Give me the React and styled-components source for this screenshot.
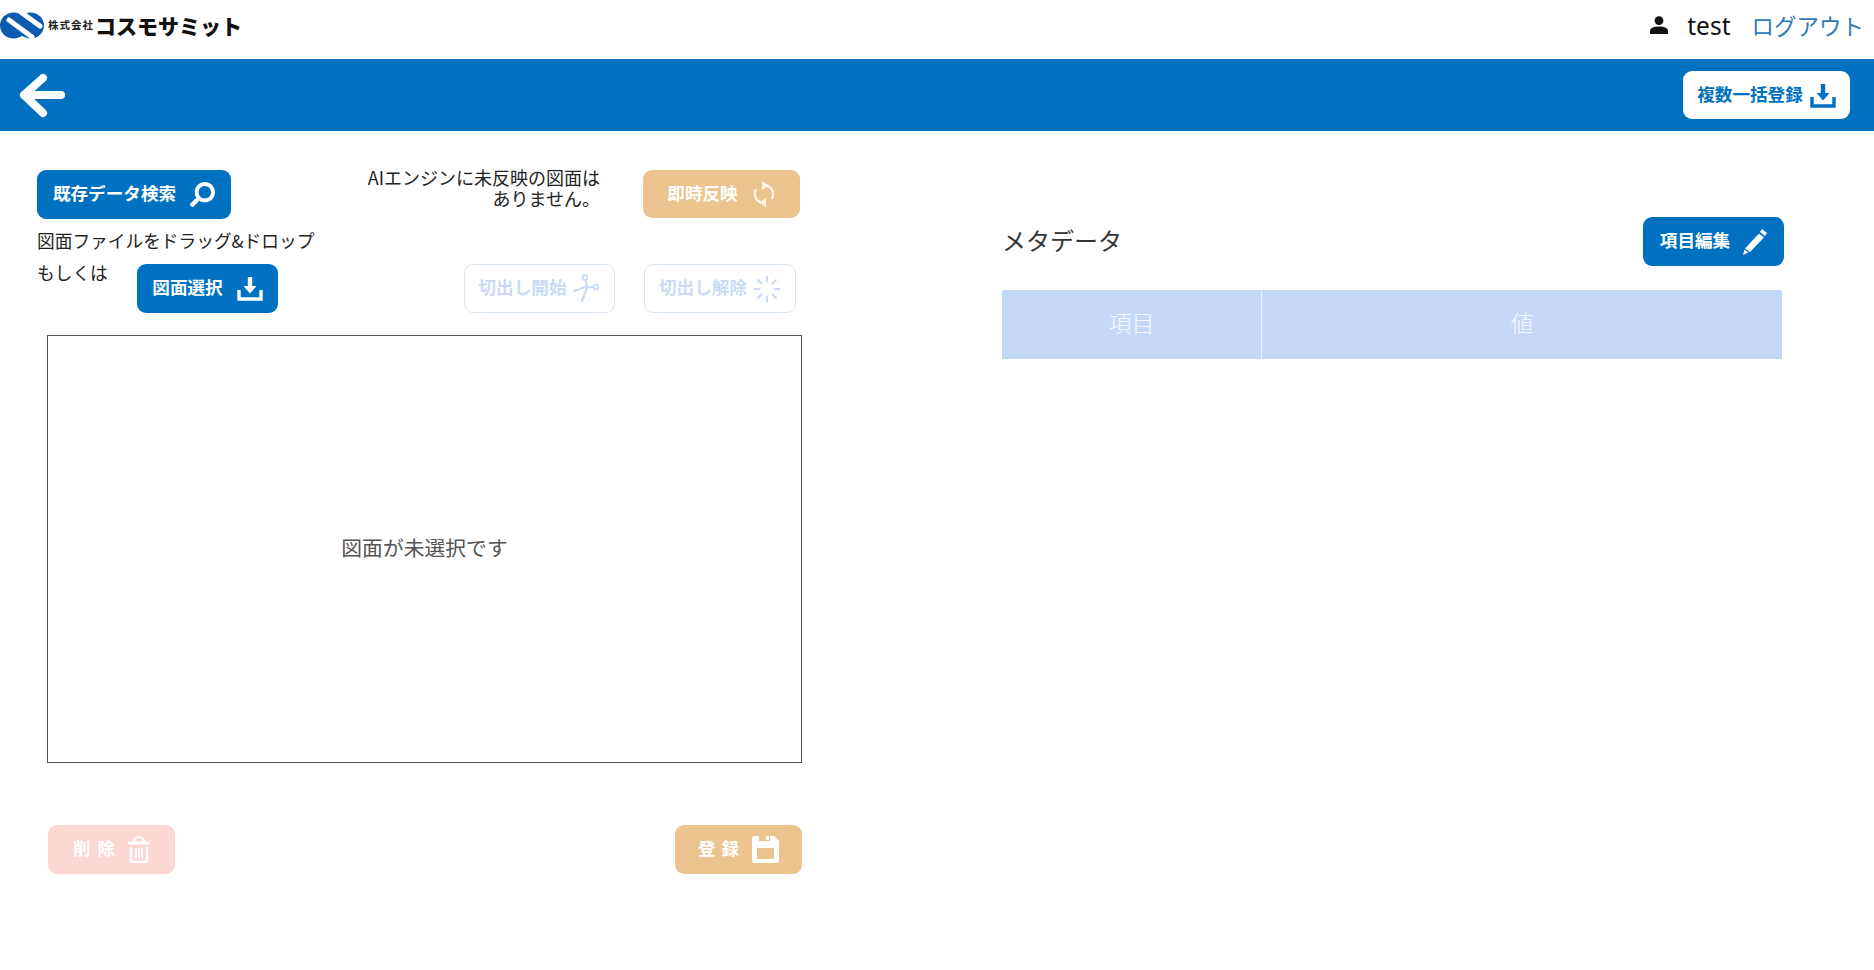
import styled, { createGlobalStyle } from 'styled-components'
import { FaSearch } from 'react-icons/fa'

const GlobalStyle = createGlobalStyle`
  html, body {
    margin: 0;
    padding: 0;
    background: #fff;
    font-family: "Noto Sans CJK JP", "Noto Sans", sans-serif;
    color: #222;
  }
`

const colors = {
  primary: '#0071c1',
  orange: '#ebc48f',
  pink: '#fdd7d3',
  faint: '#c9daf6',
}

const Page = styled.div`
  width: 1874px;
  height: 970px;
  overflow: hidden;
`
const Header = styled.header`
  height: 59px;
  display: flex;
  align-items: center;
  justify-content: space-between;
`
const Logo = styled.div`
  display: flex;
  align-items: center;
  margin-top: -8px;
`
const Company = styled.span`
  font-size: 10.5px;
  font-weight: 700;
  color: #222;
  margin-left: 4px;
  letter-spacing: 1px;
  line-height: 1;
`
const CompanyName = styled.span`
  font-size: 21px;
  font-weight: 900;
  color: #111;
  line-height: 1;
  margin-left: 1px;
`
const UserArea = styled.div`
  display: flex;
  align-items: center;
  margin-right: 10px;
  margin-top: -9px;
  font-size: 22.5px;
`
const UserName = styled.span`
  color: #111;
  margin: 0 21px 0 19px;
  font-family: "Noto Sans", sans-serif;
  font-size: 24.5px;
`
const Logout = styled.a`
  color: #337ab7;
  font-size: 22.5px;
`
const Bar = styled.div`
  height: 72px;
  background: ${colors.primary};
  display: flex;
  align-items: center;
  justify-content: space-between;
  padding: 0 24px 0 19px;
`
const Main = styled.main`
  display: flex;
`
const LeftPane = styled.section`
  width: 765px;
  margin: 39px 0 0 37px;
`
const TopRow = styled.div`
  display: flex;
  height: 49px;
`
const Notice = styled.p`
  width: 271px;
  margin: -3px 0 0 98px;
  text-align: right;
  font-size: 18px;
  line-height: 21px;
`
const HintRow = styled.div`
  display: flex;
  justify-content: space-between;
  height: 94px;
`
const HintText = styled.p`
  margin: 9px 0 0;
  font-size: 17.7px;
  line-height: 24px;
`
const SelectRow = styled.div`
  display: flex;
  align-items: flex-start;
  margin-top: 12px;
`
const SelectLabel = styled.span`
  font-size: 17.7px;
  line-height: 24px;
  width: 100px;
  margin-top: -4px;
`
const CutButtons = styled.div`
  display: flex;
  gap: 29px;
  align-items: flex-end;
  margin-right: 6px;
`
const Button = styled.button`
  box-sizing: border-box;
  display: flex;
  align-items: center;
  justify-content: center;
  gap: ${(p) => p.$gap || 14}px;
  width: ${(p) => p.$w}px;
  height: ${(p) => p.$h || 49}px;
  margin-left: ${(p) => p.$ml || 0}px;
  padding: 0;
  border: ${(p) => (p.$outline ? '1px solid #dce7f5' : 'none')};
  border-radius: 9px;
  background: ${(p) => p.$bg};
  color: ${(p) => p.$color || '#fff'};
  font-family: inherit;
  font-size: 17.6px;
  font-weight: 700;
  letter-spacing: ${(p) => p.$spacing || 0};
  white-space: nowrap;
  flex-shrink: 0;
`
const Label = styled.span`
  margin-top: -4px;
`
const Canvas = styled.div`
  box-sizing: border-box;
  width: 755px;
  height: 428px;
  margin: 22px 0 0 10px;
  padding-bottom: 5px;
  border: 1px solid #555;
  display: flex;
  align-items: center;
  justify-content: center;
  font-size: 20.8px;
  color: #555;
`
const Footer = styled.div`
  display: flex;
  justify-content: space-between;
  width: 755px;
  margin: 62px 0 0 10px;
`
const RightPane = styled.section`
  width: 782px;
  margin: 86px 0 0 200px;
`
const MetaHead = styled.div`
  display: flex;
  align-items: center;
  justify-content: space-between;
  width: 782px;
`
const MetaTitle = styled.h2`
  margin: 0;
  padding-bottom: 5px;
  font-size: 24px;
  font-weight: 400;
  color: #333;
`
const Table = styled.div`
  display: grid;
  grid-template-columns: 259px 1fr;
  width: 780px;
  height: 69px;
  margin-top: 24px;
  background: #c6d8f7;
`
const HeadCell = styled.div`
  display: flex;
  align-items: center;
  justify-content: center;
  padding-bottom: 5px;
  color: #f5f8fe;
  font-size: 23px;
  font-weight: 300;
  & + & {
    border-left: 1px solid #eaf1fc;
  }
`

const UserIcon = () => (
  <svg width="18" height="18" viewBox="0 0 18 18" fill="#111">
    <circle cx="9" cy="4.6" r="4.4" />
    <path d="M0 18 V15 Q0 10.5 9 10.5 Q18 10.5 18 15 V18 Z" />
  </svg>
)
const BackIcon = () => (
  <svg width="47" height="46" viewBox="0 0 47 46" fill="none" stroke="#fff" strokeWidth="8" strokeLinecap="round" strokeLinejoin="round">
    <path d="M24 6 L5 23 L24 41 M5 23 H42" />
  </svg>
)
const DownloadIcon = ({ color = '#fff' }) => (
  <svg width="26" height="25" viewBox="0 0 26 25" fill="none" stroke={color} strokeWidth="3.4">
    <path d="M2 14 V23 H24 V14" />
    <path d="M13 1 V12" strokeWidth="4.4" />
    <path d="M6.5 10 H19.5 L13 17.5 Z" fill={color} strokeWidth="0" />
  </svg>
)
const RefreshIcon = () => (
  <svg width="24" height="26" viewBox="0 0 24 26" fill="none" stroke="#fdf4e8" strokeWidth="2.4">
    <path d="M15 4.5 A 9.5 9.5 0 0 1 20 18" />
    <path d="M9 21.5 A 9.5 9.5 0 0 1 4 8" />
    <path d="M10 0 L17 4.5 L10 9 Z" fill="#fdf4e8" strokeWidth="0" />
    <path d="M14 17 L7 21.5 L14 26 Z" fill="#fdf4e8" strokeWidth="0" />
  </svg>
)
const ScissorsIcon = () => (
  <svg width="28" height="30" viewBox="0 0 28 30" fill="none" stroke={colors.faint} strokeWidth="1.8" strokeLinecap="round">
    <circle cx="13" cy="3.5" r="2.4" />
    <circle cx="24" cy="13" r="2.4" />
    <path d="M13.5 6 L15 14 L10 27" strokeWidth="2.2" />
    <path d="M21 13 L12 13.5 L2 17" strokeWidth="2.2" />
  </svg>
)
const SpinnerIcon = () => (
  <svg width="28" height="28" viewBox="0 0 28 28" fill="none" stroke={colors.faint} strokeWidth="2" strokeLinecap="round">
    <path d="M14 1.5 V6.5 M14 21.5 V26.5 M1.5 14 H6.5 M21.5 14 H26.5 M5 5 L8.5 8.5 M19.5 19.5 L23 23 M23 5 L19.5 8.5 M8.5 19.5 L5 23" />
  </svg>
)
const TrashIcon = () => (
  <svg width="22" height="27" viewBox="0 0 22 27" fill="none" stroke="#fff" strokeWidth="2">
    <path d="M6 6 Q6 1 11 1 Q16 1 16 6" />
    <path d="M0 7 H22" strokeWidth="3" />
    <path d="M3 11 V25 Q3 26 4 26 H18 Q19 26 19 25 V11" strokeWidth="2.4" />
    <path d="M8 12 V23 M11 12 V23 M14 12 V23" strokeWidth="1.6" />
  </svg>
)
const SaveIcon = () => (
  <svg width="27" height="27" viewBox="0 0 27 27">
    <path
      fill="#fff"
      fillRule="evenodd"
      d="M2 0 H7 V5 H18 V0 H22 L27 5 V25 Q27 27 25 27 H2 Q0 27 0 25 V2 Q0 0 2 0 Z M5 12 V23 H22 V12 Z"
    />
    <rect x="14" y="0" width="3" height="4" fill="#fff" />
  </svg>
)
const PenIcon = () => (
  <svg width="24" height="26" viewBox="0 0 24 26" fill="#fff">
    <path d="M19 0 L24 4 L22 7 L17 3 Z" />
    <path d="M16 4.5 L21 8.5 L7 23 L2 19.5 Z" />
    <path d="M1.5 20.5 L5.5 23.5 L0 26 Z" />
  </svg>
)
const LogoMark = () => (
  <svg width="44" height="27" viewBox="0 0 44 27">
    <ellipse cx="13.5" cy="13.5" rx="13.5" ry="13" fill="#0b5cb0" />
    <ellipse cx="30.5" cy="13.5" rx="13.5" ry="13" fill="#0b5cb0" />
    <path d="M9 8 L32 25 M22 1 L40 14" stroke="#fff" strokeWidth="5" strokeLinecap="round" />
  </svg>
)

function App() {
  return (
    <Page>
      <GlobalStyle />
      <Header>
        <Logo>
          <LogoMark />
          <Company>株式会社</Company>
          <CompanyName>コスモサミット</CompanyName>
        </Logo>
        <UserArea>
          <UserIcon />
          <UserName>test</UserName>
          <Logout>ログアウト</Logout>
        </UserArea>
      </Header>
      <Bar>
        <BackIcon />
        <Button $w={167} $h={48} $bg="#fff" $color={colors.primary} $gap={7}>
          <Label>複数一括登録</Label>
          <DownloadIcon color={colors.primary} />
        </Button>
      </Bar>
      <Main>
        <LeftPane>
          <TopRow>
            <Button $w={194} $bg={colors.primary}>
              <Label>既存データ検索</Label>
              <FaSearch size={25} style={{ transform: 'scaleX(-1)' }} />
            </Button>
            <Notice>
              AIエンジンに未反映の図面は
              <br />
              ありません。
            </Notice>
            <Button $w={157} $h={48} $ml={43} $bg={colors.orange}>
              <Label>即時反映</Label>
              <RefreshIcon />
            </Button>
          </TopRow>
          <HintRow>
            <div>
              <HintText>図面ファイルをドラッグ&ドロップ</HintText>
              <SelectRow>
                <SelectLabel>もしくは</SelectLabel>
                <Button $w={141} $bg={colors.primary}>
                  <Label>図面選択</Label>
                  <DownloadIcon />
                </Button>
              </SelectRow>
            </div>
            <CutButtons>
              <Button $w={151} $outline $bg="#fff" $color={colors.faint} $gap={6}>
                <Label>切出し開始</Label>
                <ScissorsIcon />
              </Button>
              <Button $w={152} $outline $bg="#fff" $color={colors.faint} $gap={6}>
                <Label>切出し解除</Label>
                <SpinnerIcon />
              </Button>
            </CutButtons>
          </HintRow>
          <Canvas>図面が未選択です</Canvas>
          <Footer>
            <Button $w={127} $ml={1} $bg={colors.pink} $spacing="7px" $gap={6}>
              <Label>削除</Label>
              <TrashIcon />
            </Button>
            <Button $w={127} $bg={colors.orange} $spacing="6px" $gap={7}>
              <Label>登録</Label>
              <SaveIcon />
            </Button>
          </Footer>
        </LeftPane>
        <RightPane>
          <MetaHead>
            <MetaTitle>メタデータ</MetaTitle>
            <Button $w={141} $bg={colors.primary} $gap={13}>
              <Label>項目編集</Label>
              <PenIcon />
            </Button>
          </MetaHead>
          <Table>
            <HeadCell>項目</HeadCell>
            <HeadCell>値</HeadCell>
          </Table>
        </RightPane>
      </Main>
    </Page>
  )
}

export default App
